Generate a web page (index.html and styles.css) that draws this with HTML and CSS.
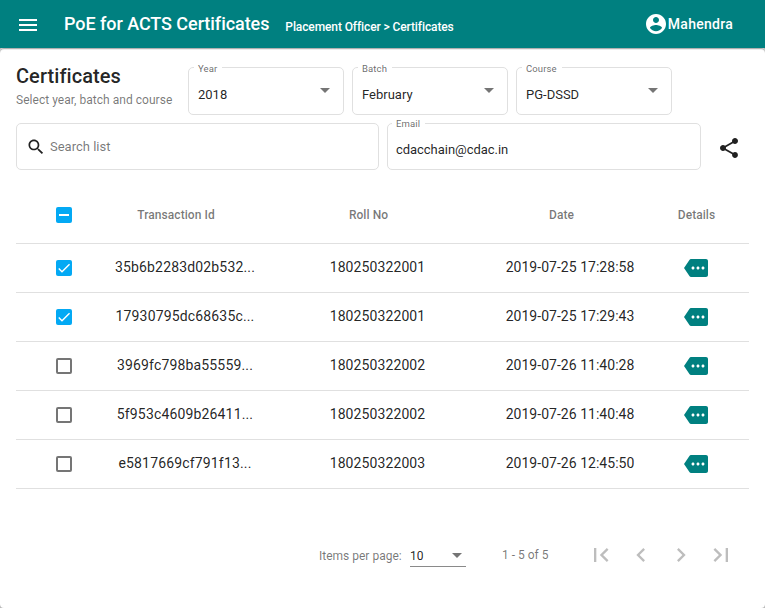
FILE: index.html
```html
<!DOCTYPE html>
<html lang="en">
<head>
<meta charset="utf-8">
<title>PoE for ACTS Certificates</title>
<link rel="stylesheet" href="styles.css">
</head>
<body>
<svg class="defs">
  <symbol id="check" viewBox="0 0 24 24"><path d="M4.1 12.7 9 17.6 20.3 6.3" fill="none" stroke="#fff" stroke-width="2.1"/></symbol>
  <symbol id="more" viewBox="0 0 24 24"><path d="M22 3H7c-.69 0-1.23.35-1.59.88L0 12l5.41 8.11c.36.53.97.89 1.66.89H22c1.1 0 2-.9 2-2V5c0-1.100-.9-2-2-2zM9 13.500c-.83 0-1.500-.67-1.500-1.500s.67-1.500 1.500-1.500 1.500.67 1.500 1.500-.67 1.500-1.500 1.500zm5 0c-.83 0-1.500-.67-1.500-1.500s.67-1.500 1.500-1.500 1.500.67 1.500 1.500-.67 1.500-1.500 1.500zm5 0c-.83 0-1.500-.67-1.500-1.500s.67-1.500 1.500-1.500 1.500.67 1.500 1.500-.67 1.500-1.500 1.500z"/></symbol>
</svg>
<header class="toolbar">
  <svg class="menu" viewBox="0 0 24 24"><path d="M3 18h18v-2H3v2zm0-5h18v-2H3v2zm0-7v2h18V6H3z"/></svg>
  <h1>PoE for ACTS Certificates</h1>
  <span class="crumbs">Placement Officer &gt; Certificates</span>
  <div class="user">
    <svg viewBox="0 0 24 24"><path d="M12 2C6.480 2 2 6.480 2 12s4.480 10 10 10 10-4.480 10-10S17.520 2 12 2zm0 3c1.660 0 3 1.340 3 3s-1.340 3-3 3-3-1.340-3-3 1.340-3 3-3zm0 14.200c-2.500 0-4.710-1.280-6-3.220.03-1.990 4-3.080 6-3.080 1.990 0 5.970 1.090 6 3.080-1.290 1.940-3.500 3.220-6 3.220z"/></svg>
    <span>Mahendra</span>
  </div>
</header>
<main class="card">
  <section class="filters">
    <div class="heading"><h2>Certificates</h2><p>Select year, batch and course</p></div>
    <div class="field"><label>Year</label><span>2018</span><i class="arrow"></i></div>
    <div class="field"><label>Batch</label><span>February</span><i class="arrow"></i></div>
    <div class="field"><label>Course</label><span>PG-DSSD</span><i class="arrow"></i></div>
  </section>
  <section class="filters second">
    <div class="field search"><svg viewBox="0 0 24 24"><path d="M15.500 14h-.79l-.28-.27C15.410 12.590 16 11.110 16 9.500 16 5.910 13.090 3 9.500 3S3 5.910 3 9.500 5.910 16 9.500 16c1.610 0 3.090-.59 4.230-1.570l.27.28v.79l5 4.990L20.490 19l-4.990-5zm-6 0C7.010 14 5 11.990 5 9.500S7.010 5 9.500 5 14 7.010 14 9.500 11.990 14 9.500 14z"/></svg><span>Search list</span></div>
    <div class="field email"><label>Email</label><span>cdacchain@cdac.in</span></div>
    <svg class="share" viewBox="0 0 24 24"><path d="M18 16.080c-.76 0-1.440.3-1.960.77L8.910 12.700c.05-.23.09-.46.09-.7s-.04-.47-.09-.7l7.050-4.110c.54.5 1.250.81 2.040.81 1.660 0 3-1.340 3-3s-1.340-3-3-3-3 1.340-3 3c0 .24.04.47.09.7L8.040 9.810C7.500 9.310 6.790 9 6 9c-1.660 0-3 1.340-3 3s1.340 3 3 3c.79 0 1.500-.31 2.040-.81l7.120 4.160c-.05.21-.08.43-.08.65 0 1.610 1.310 2.920 2.920 2.920s2.920-1.310 2.920-2.920-1.310-2.920-2.920-2.920z"/></svg>
  </section>
  <section class="table">
    <div class="row head"><span class="box on"><i class="dash"></i></span><span class="tx">Transaction Id</span><span class="roll">Roll No</span><span class="date">Date</span><span>Details</span></div>
    <div class="row"><span class="box on"><svg><use href="#check"/></svg></span><span class="id">35b6b2283d02b532...</span><span class="num">180250322001</span><span>2019-07-25 17:28:58</span><svg class="more"><use href="#more"/></svg></div>
    <div class="row"><span class="box on"><svg><use href="#check"/></svg></span><span class="id">17930795dc68635c...</span><span class="num">180250322001</span><span>2019-07-25 17:29:43</span><svg class="more"><use href="#more"/></svg></div>
    <div class="row"><span class="box"></span><span class="id">3969fc798ba55559...</span><span class="num">180250322002</span><span>2019-07-26 11:40:28</span><svg class="more"><use href="#more"/></svg></div>
    <div class="row"><span class="box"></span><span class="id">5f953c4609b26411...</span><span class="num">180250322002</span><span>2019-07-26 11:40:48</span><svg class="more"><use href="#more"/></svg></div>
    <div class="row"><span class="box"></span><span class="id">e5817669cf791f13...</span><span class="num">180250322003</span><span>2019-07-26 12:45:50</span><svg class="more"><use href="#more"/></svg></div>
  </section>
  <footer class="pager">
    <span class="per">Items per page:</span>
    <div class="size"><span>10</span><i class="arrow"></i></div>
    <span class="range">1 - 5 of 5</span>
    <nav>
      <svg viewBox="0 0 24 24"><path d="M18.410 16.590L13.820 12l4.590-4.590L17 6l-6 6 6 6zM6 6h2v12H6z"/></svg>
      <svg viewBox="0 0 24 24"><path d="M15.410 7.410L14 6l-6 6 6 6 1.410-1.410L10.830 12z"/></svg>
      <svg viewBox="0 0 24 24"><path d="M10 6L8.590 7.410 13.170 12l-4.580 4.590L10 18l6-6z"/></svg>
      <svg viewBox="0 0 24 24"><path d="M5.590 7.410L10.180 12l-4.590 4.590L7 18l6-6-6-6zM16 6h2v12h-2z"/></svg>
    </nav>
  </footer>
</main>
</body>
</html>
```
FILE: styles.css
```css
* { box-sizing: border-box; }
body { margin: 0; height: 608px; overflow: hidden; background: #b8b8b8; color: rgba(0,0,0,.87); font: 14px Roboto, sans-serif; }
.defs { display: none; }
svg { display: block; flex: none; }
h1, h2, p { margin: 0; font-weight: 500; }
.toolbar { height: 48px; background: teal; color: #fff; display: flex; align-items: center; padding: 0 32px 0 16px; }
.toolbar svg { width: 24px; height: 24px; fill: #fff; }
.menu { margin-top: 2px; }
.toolbar h1 { font-size: 18px; line-height: 24px; margin-left: 24px; letter-spacing: -.06px; }
.crumbs { font-size: 12px; font-weight: 500; margin: 6px 0 0 16px; letter-spacing: -.11px; }
.user { margin-left: auto; display: flex; align-items: center; font-weight: 500; letter-spacing: .27px; }
.card { height: 560px; background: #fff; border-radius: 4px; padding: 19px 16px 0; box-shadow: inset 0 1px #b0b0b0, inset 0 2px #ececec; }
.filters { display: flex; gap: 8px; height: 48px; }
.heading { width: 164px; white-space: nowrap; }
.heading h2 { font-size: 20px; line-height: 18px; letter-spacing: .06px; }
.heading p { font-size: 12px; line-height: 16px; font-weight: 400; color: rgba(0,0,0,.54); margin-top: 7px; letter-spacing: .03px; }
.field { position: relative; width: 156px; border: 1px solid #e0e0e0; border-radius: 5px; display: flex; align-items: center; padding: 7px 13px 0 9px; font-size: 13px; }
.field label { position: absolute; left: 5px; top: -5px; background: #fff; padding: 0 5px 0 4px; font-size: 9.500px; line-height: 12px; color: rgba(0,0,0,.6); letter-spacing: .12px; }
.arrow { margin-left: auto; border: 5px solid transparent; border-top-color: rgba(0,0,0,.54); border-bottom: 0; }
.field .arrow { margin-top: -9px; }
.second { height: 47px; margin-top: 8px; }
.search { width: 363px; padding: 0 9px; color: rgba(0,0,0,.54); }
.search svg { width: 20px; height: 20px; fill: rgba(0,0,0,.87); margin-right: 4px; }
.email { width: 314px; padding: 5px 9px 0 8px; letter-spacing: -.04px; }
.email label { left: 4px; top: -6px; }
.share { width: 24px; height: 24px; fill: rgba(0,0,0,.87); margin: 13px 0 0 8px; }
.table { margin-top: 17px; }
.row { display: grid; grid-template-columns: 80px 178px 208px 176px 77px; height: 49px; align-items: center; text-align: center; border-bottom: 1px solid #e0e0e0; padding-bottom: 2px; letter-spacing: .03px; }
.id { letter-spacing: .16px; }
.num { letter-spacing: .1px; padding-right: 1px; }
.head { height: 57px; font-size: 12px; font-weight: 500; color: rgba(0,0,0,.54); padding-bottom: 0; letter-spacing: .06px; }
.tx { padding-right: 18px; }
.roll { padding-right: 19px; }
.date { padding-right: 17px; }
.box { width: 16px; height: 16px; margin: 2px 0 0 40px; border: 2px solid #757575; border-radius: 2px; }
.head .box { margin-top: 0; }
.box.on { background: #03a9f4; border: 0; }
.box svg { width: 16px; height: 16px; }
.dash { display: block; width: 10px; height: 2px; margin: 7px 3px; background: #fff; }
.more { width: 24px; height: 24px; fill: teal; margin: 2px 0 0 26px; }
.pager { height: 56px; margin-top: 38px; display: flex; align-items: center; font-size: 12px; color: rgba(0,0,0,.54); }
.per { margin-left: 303px; width: 83px; margin-top: 2px; white-space: nowrap; }
.size { width: 56px; height: 23px; margin: 1px 0 0 8px; border-bottom: 1px solid #8a8a8a; display: flex; align-items: center; padding-right: 4px; color: rgba(0,0,0,.87); }
.size span { padding-top: 2px; letter-spacing: .1px; }
.range { margin-left: 36px; width: 47px; white-space: nowrap; }
.pager nav { display: flex; gap: 12px; margin-left: 38px; fill: rgba(0,0,0,.26); }
.pager nav svg { width: 28px; height: 28px; }
```
